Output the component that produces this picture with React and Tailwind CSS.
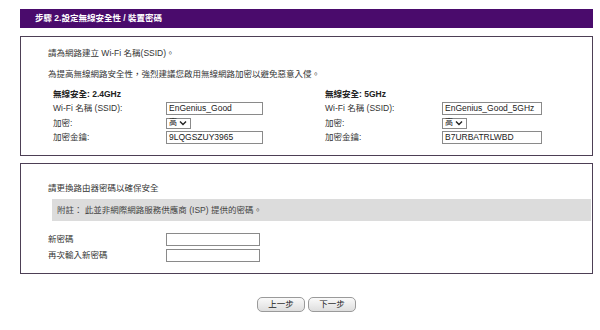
import React from 'react'

const font = { fontFamily: '"Liberation Sans", "Noto Sans CJK TC", sans-serif' }

function TextBox({ value, w = 'w-[97px]' }) {
    return (
        <div className={`${w} h-[13px] border border-[#8a8a8a] bg-white flex items-center px-[2px] text-[8.5px] text-[#222] leading-none whitespace-nowrap overflow-hidden`}>
            {value}
        </div>
    )
}

function Select() {
    return (
        <div className="w-[25px] h-[11px] border border-[#8a8a8a] bg-white flex items-center pl-[2px] gap-[2px] text-[8px] leading-none text-[#222]">
            <span>高</span>
            <svg width="8" height="6" viewBox="0 0 8 6">
                <path d="M1 1.5 L4 4.5 L7 1.5" fill="none" stroke="#222" strokeWidth="1.4" />
            </svg>
        </div>
    )
}

function Band({ title, ssid, pass, width, labelW, boxW }) {
    return (
        <div className={`${width} shrink-0 text-[8.5px] text-[#333]`}>
            <div className="h-[13px] flex items-center font-bold text-[#222]">{title}</div>
            <div className="h-[15px] flex items-center">
                <span className={labelW}>Wi-Fi 名稱 (SSID):</span>
                <TextBox value={ssid} w={boxW} />
            </div>
            <div className="h-[14px] flex items-center">
                <span className={labelW}>加密:</span>
                <Select />
            </div>
            <div className="h-[15px] flex items-center">
                <span className={labelW}>加密金鑰:</span>
                <TextBox value={pass} w={boxW} />
            </div>
        </div>
    )
}

export default function App() {
    return (
        <div className="w-[600px] h-[330px] bg-white pt-[9px] pl-[20px] pr-[7px]" style={font}>
            <div className="h-[19px] bg-[#4a0b6c] text-white font-bold text-[8.5px] pl-[15px] flex items-center">
                步驟 2.設定無線安全性 / 裝置密碼
            </div>

            <div className="mt-[8px] h-[120px] border border-[#4d3f55] pl-[27px] pt-[10px]">
                <p className="text-[8.5px] text-[#333] h-[12px] leading-[12px]">請為網路建立 Wi-Fi 名稱(SSID)。</p>
                <p className="mt-[9px] text-[8.5px] text-[#333] h-[12px] leading-[12px]">
                    為提高無線網路安全性，強烈建議您啟用無線網路加密以避免惡意入侵。
                </p>
                <div className="mt-[8px] flex pl-[5px]">
                    <Band title="無線安全: 2.4GHz" ssid="EnGenius_Good" pass="9LQGSZUY3965" width="w-[272px]" labelW="w-[113px]" boxW="w-[97px]" />
                    <Band title="無線安全: 5GHz" ssid="EnGenius_Good_5GHz" pass="B7URBATRLWBD" width="w-[260px]" labelW="w-[117px]" boxW="w-[100px]" />
                </div>
            </div>

            <div className="mt-[7px] h-[111px] border border-[#4d3f55] pl-[27px] pt-[18px] text-[8.5px] text-[#333]">
                <p className="h-[12px] leading-[12px]">請更換路由器密碼以確保安全</p>
                <div className="mt-[5px] ml-[4px] mr-[1px] h-[22px] bg-[#dcdcdc] flex items-center pl-[5px] text-[#444]">
                    附註： 此並非網際網路服務供應商 (ISP) 提供的密碼。
                </div>
                <div className="mt-[11px] h-[14px] flex items-center">
                    <span className="w-[118px]">新密碼</span>
                    <TextBox value="" w="w-[94px]" />
                </div>
                <div className="mt-[2px] h-[14px] flex items-center">
                    <span className="w-[118px]">再次輸入新密碼</span>
                    <TextBox value="" w="w-[94px]" />
                </div>
            </div>

            <div className="mt-[23px] flex justify-center gap-[3px]">
                <button className="w-[48px] h-[15px] rounded-[5px] border border-[#9a9a9a] bg-gradient-to-b from-[#fafafa] to-[#dedede] text-[8.5px] text-[#222] leading-none">
                    上一步
                </button>
                <button className="w-[48px] h-[15px] rounded-[5px] border border-[#9a9a9a] bg-gradient-to-b from-[#fafafa] to-[#dedede] text-[8.5px] text-[#222] leading-none">
                    下一步
                </button>
            </div>
        </div>
    )
}
